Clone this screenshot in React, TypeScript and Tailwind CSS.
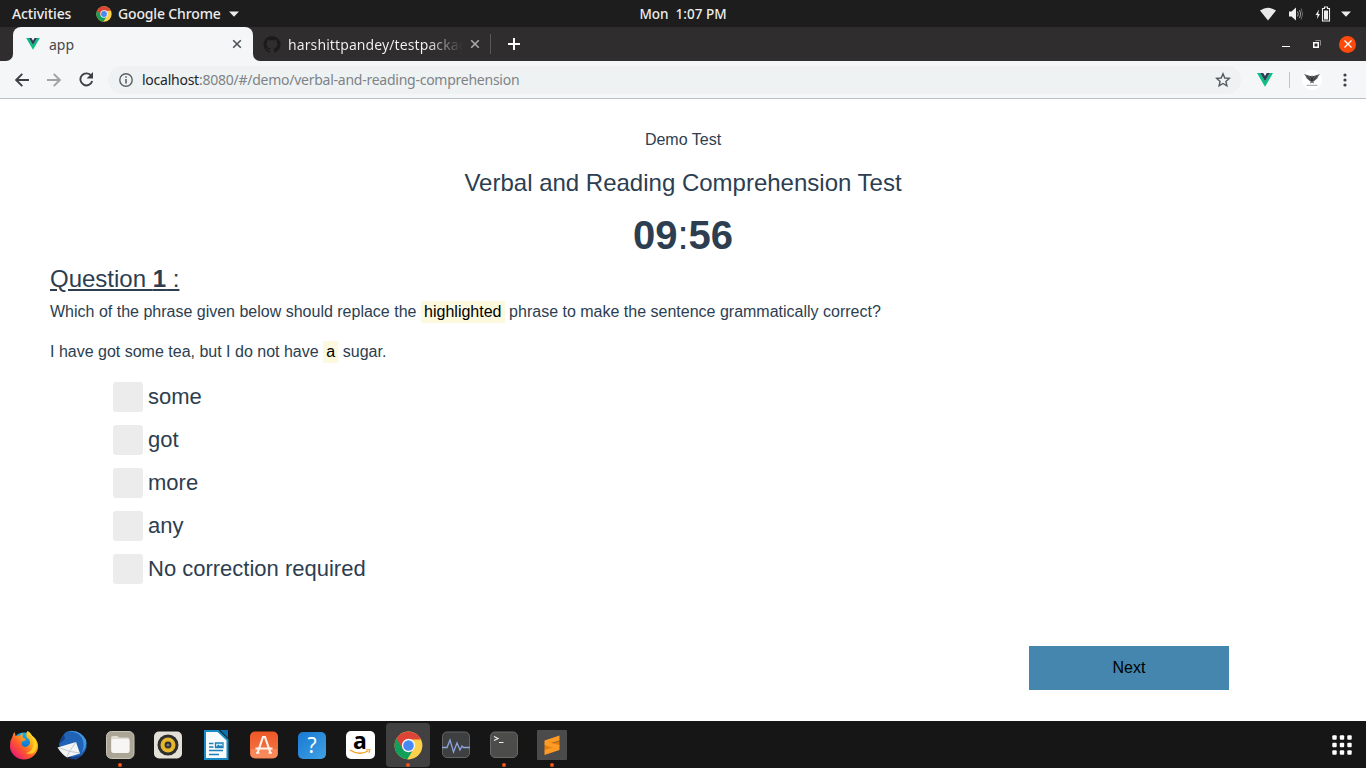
import type { ReactNode } from "react";

const uiFont = "font-['Noto_Sans','Open_Sans',sans-serif]";

function ChromeLogo({ size }: { size: number }) {
  return (
    <svg width={size} height={size} viewBox="0 0 48 48" className="shrink-0">
      <circle cx="24" cy="24" r="23" fill="#fdd14c" />
      <path d="M24 24 4.1 12.5A23 23 0 0 0 22 46.9L33 29z" fill="#11a05c" />
      <path d="M4.1 12.5A23 23 0 0 1 44.6 14H24L14.5 30z" fill="#dc4437" />
      <circle cx="24" cy="24" r="11" fill="#f5f5f5" />
      <circle cx="24" cy="24" r="8.7" fill="#4688f4" />
    </svg>
  );
}

function VueLogo({ width, height }: { width: number; height: number }) {
  return (
    <svg width={width} height={height} viewBox="0 0 16 14" className="shrink-0">
      <path d="M0 0h3.2L8 8.3 12.8 0H16L8 13.8z" fill="#0abf83" />
      <path d="M3.2 0h3L8 3.1 9.8 0h3L8 8.3z" fill="#303b57" />
    </svg>
  );
}

function CloseGlyph({ color }: { color: string }) {
  return (
    <svg width="10" height="10" viewBox="0 0 10 10" className="shrink-0">
      <path d="M1.2 1.2l7.6 7.6M8.8 1.2L1.2 8.8" stroke={color} strokeWidth="1.6" />
    </svg>
  );
}

function SystemBar() {
  return (
    <header className="grid h-[27px] shrink-0 grid-cols-[1fr_auto_1fr] items-center bg-[#1d1d1d] text-[14px] leading-[26px] font-medium text-[#ececea]">
      <div className="flex items-center pl-3">
        <span className="w-[84px] tracking-[-0.1px] whitespace-nowrap">Activities</span>
        <ChromeLogo size={16} />
        <span className="ml-[6px] w-[107px] tracking-[-0.15px] whitespace-nowrap">Google Chrome</span>
        <svg width="10" height="6" viewBox="0 0 10 6" className="ml-[4px]">
          <path d="M0 0.5h10L5 5.7z" fill="#ececea" />
        </svg>
      </div>
      <span className="text-[13.5px] whitespace-pre">Mon  1:07 PM</span>
      <div className="flex items-center justify-end pr-[15px]">
        <svg width="16" height="14" viewBox="0 0 16 14">
          <path d="M0 3.6Q8-2.2 16 3.6L8 13.4z" fill="#e9e9e9" />
        </svg>
        <svg width="16" height="14" viewBox="0 0 16 14" className="ml-[12px]">
          <path d="M1 4.5h2.5L8 .5v13l-4.500-4H1z" fill="#f0f0f0" />
          <path d="M9.500 4.500q1.500 2.500 0 5M11.500 3q2.500 4 0 8" fill="none" stroke="#a0a0a0" strokeWidth="1" />
          <path d="M13.200 1.500q2.800 5.500 0 11" fill="none" stroke="#666" strokeWidth="1" />
        </svg>
        <svg width="16" height="16" viewBox="0 0 16 16" className="ml-[11px]">
          <path d="M4 3.500 .5 9h2L2 13l3-5H3.200z" fill="#f0f0f0" />
          <path d="M7.500 2.500h2v-1.500h3v1.500h2v12.500h-7z" fill="none" stroke="#eee" strokeWidth="1.1" />
          <path d="M9 4.500h4v9H9z" fill="#eee" />
        </svg>
        <svg width="10" height="6" viewBox="0 0 10 6" className="ml-[10px]">
          <path d="M0 0.500h10L5 5.700z" fill="#ececea" />
        </svg>
      </div>
    </header>
  );
}

function TabStrip() {
  return (
    <div className="flex h-[34px] shrink-0 items-stretch bg-[#302d2e] text-[14px]">
      <div className="flex w-[13px] bg-[#f4f6f8]">
        <div className="w-full rounded-br-[7px] bg-[#302d2e]" />
      </div>
      <div className="flex w-[240px] items-center rounded-t-[8px] bg-[#f4f6f8] pr-[11px] pl-[13px] text-[#45484c]">
        <VueLogo width={14} height={12} />
        <span className="ml-[9px] flex-1">app</span>
        <CloseGlyph color="#4e5155" />
      </div>
      <div className="flex w-[10px] bg-[#f4f6f8]">
        <div className="w-full rounded-bl-[7px] bg-[#302d2e]" />
      </div>
      <div className="flex w-[229px] items-center border-r border-transparent">
        <svg width="18" height="17" viewBox="0 0 16 16" className="shrink-0">
          <path
            fill="#1b1b1c"
            d="M8 0a8 8 0 0 0-2.530 15.590c.4.070.550-.170.550-.380v-1.490c-2.010.370-2.530-.490-2.690-.940-.090-.230-.480-.940-.820-1.130-.280-.150-.680-.520-.010-.530.630-.010 1.080.580 1.230.820.720 1.210 1.870.870 2.330.660.070-.520.280-.870.510-1.070-1.780-.2-3.640-.890-3.640-3.950 0-.870.310-1.590.820-2.150-.080-.200-.360-1.020.080-2.120 0 0 .670-.210 2.200.820a7.600 7.600 0 0 1 4 0c1.530-1.040 2.200-.820 2.200-.820.440 1.100.160 1.920.080 2.120.510.560.820 1.270.820 2.150 0 3.070-1.870 3.750-3.650 3.950.290.250.540.730.540 1.480v2.200c0 .210.150.460.550.380A8 8 0 0 0 8 0z"
          />
        </svg>
        <span className="ml-[7px] w-[176px] overflow-hidden bg-linear-to-r from-[#f4f4f4] from-80% to-[#302d2e] bg-clip-text tracking-[0.1px] whitespace-nowrap text-transparent">
          harshittpandey/testpackage
        </span>
        <span className="ml-[7px]">
          <CloseGlyph color="#aaa9aa" />
        </span>
        <span className="ml-[10px] h-[20px] w-px bg-[#5a5758]" />
      </div>
      <div className="flex flex-1 items-center pl-[16px]">
        <svg width="12" height="12" viewBox="0 0 12 12">
          <path d="M6 0v12M0 6h12" stroke="#fff" strokeWidth="2" />
        </svg>
      </div>
      <div className="flex items-center pr-[10px]">
        <svg width="8" height="9" viewBox="0 0 8 9">
          <path d="M0 6.500h8" stroke="#fff" />
        </svg>
        <svg width="8" height="8" viewBox="0 0 8 8" className="ml-[23px]">
          <path d="M2.500.5h5v5" fill="none" stroke="#8b898a" />
          <path d="M.75 2.750h4.500v4.500H.750z" fill="none" stroke="#fff" strokeWidth="1.500" />
        </svg>
        <span className="ml-[18px] flex size-[17px] items-center justify-center rounded-full bg-[#fc4a0a]">
          <svg width="8" height="8" viewBox="0 0 8 8">
            <path d="M.5.5l7 7M7.500.5l-7 7" stroke="#fff" strokeWidth="1.300" />
          </svg>
        </span>
      </div>
    </div>
  );
}

function Toolbar() {
  return (
    <div className="flex h-[38px] shrink-0 items-center border-b border-[#b9bfc9] bg-[#f4f6f8] pr-[19px] pl-[15px]">
      <svg width="14" height="14" viewBox="0 0 14 14">
        <path d="M14 7H1.500M7.300 .8L1.200 7l6.100 6.200" fill="none" stroke="#3e4144" strokeWidth="1.900" />
      </svg>
      <svg width="14" height="14" viewBox="0 0 14 14" className="ml-[18px]">
        <path d="M0 7h12.500M6.700 .8L12.800 7l-6.100 6.200" fill="none" stroke="#a0a2a4" strokeWidth="1.900" />
      </svg>
      <svg width="15" height="15" viewBox="0 0 15 15" className="ml-[18px]">
        <path d="M12.300 3.900A6 6 0 1 0 13.200 9" fill="none" stroke="#3e4144" strokeWidth="1.900" />
        <path d="M14 0v6.400H7.600z" fill="#3e4144" />
      </svg>
      <div className="ml-[14px] flex h-[28px] w-[1133px] items-center rounded-full bg-[#eef2f3] pr-[10px] pl-[11px]">
        <svg width="14" height="14" viewBox="0 0 14 14">
          <circle cx="7" cy="7" r="6.200" fill="none" stroke="#5c6064" strokeWidth="1.400" />
          <path d="M7 6v4.600M7 3.200v1.600" stroke="#5c6064" strokeWidth="1.600" />
        </svg>
        <span className="ml-[9px] flex-1 text-[14px] tracking-[-0.25px] whitespace-nowrap text-[#7e8387]">
          <span className="text-[#222527]">localhost</span>:8080/#/demo/verbal-and-reading-comprehension
        </span>
        <svg width="16" height="16" viewBox="0 0 16 16">
          <path
            d="M8 1.800l1.800 4.200 4.500.4-3.400 3 1 4.400L8 11.500l-3.900 2.300 1-4.400-3.400-3 4.500-.4z"
            fill="none"
            stroke="#55595d"
            strokeWidth="1.400"
          />
        </svg>
      </div>
      <div className="ml-[16px] flex flex-1 items-center">
        <VueLogo width={16} height={14} />
        <span className="ml-[16px] h-[16px] w-px bg-[#c0c5ca]" />
        <svg width="20" height="20" viewBox="0 0 20 20" className="ml-[12px]">
          <circle cx="10" cy="10" r="10" fill="#fff" />
          <path
            d="M2 4l5 1.600 2 1L10 5.300l1 1.300 2-1L18 4l-1.800 2.600-.9 2-1.600 1.100-1.300 1.400-1.100.2.800 2.200L10 12.500l-2.100 1 .8-2.200-1.100-.2-1.300-1.400-1.600-1.100-.9-2z"
            fill="#606060"
          />
          <path d="M8.500 6l1.500 5 1.500-5M5.500 6.500l3 4M14.500 6.500l-3 4" stroke="#252525" strokeWidth=".8" fill="none" />
          <path d="M4.500 15.300h11" stroke="#8a8a8a" strokeWidth=".8" />
        </svg>
      </div>
      <svg width="4" height="14" viewBox="0 0 4 14">
        <circle cx="2" cy="2" r="1.600" fill="#3e4144" />
        <circle cx="2" cy="7" r="1.600" fill="#3e4144" />
        <circle cx="2" cy="12" r="1.600" fill="#3e4144" />
      </svg>
    </div>
  );
}

function Mark({ children }: { children: ReactNode }) {
  return <mark className="bg-[#fcf9df] px-[3.2px] pt-[2px] pb-[3px] text-black">{children}</mark>;
}

const options = ["some", "got", "more", "any", "No correction required"];

function TestPage() {
  return (
    <main className="flex-1 bg-white px-[50px] pt-[29px] font-['Liberation_Sans',Arial,sans-serif] text-[16px] leading-6 text-[#2c3e50]">
      <div className="text-center">
        <p>Demo Test</p>
        <h1 className="mt-[13px] text-[24px] leading-[36px]">Verbal and Reading Comprehension Test</h1>
        <div className="mt-[10px] text-[40px] leading-[48px]">
          <b>09</b>:<b>56</b>
        </div>
      </div>
      <h2 className="mt-[6px] text-[24px] leading-[28px] underline">
        Question <b>1</b> :
      </h2>
      <p className="mt-[7px]">
        Which of the phrase given below should replace the <Mark>highlighted</Mark> phrase to make the sentence
        grammatically correct?
      </p>
      <p className="mt-4">
        I have got some tea, but I do not have <Mark>a</Mark> sugar.
      </p>
      <ul className="mt-[18px] flex flex-col gap-[13px] pl-[63px]">
        {options.map((option) => (
          <li key={option} className="flex h-[30px] items-center gap-[5px] text-[22px] leading-[30px]">
            <span className="size-[30px] rounded-[3px] bg-[#ececec]" />
            {option}
          </li>
        ))}
      </ul>
      <div className="mt-[62px] flex justify-end pr-[87px]">
        <button className="h-[44px] w-[200px] bg-[#4486ae] text-black">Next</button>
      </div>
    </main>
  );
}

function Firefox() {
  return (
    <svg width="30" height="30" viewBox="0 0 30 30">
      <defs>
        <linearGradient id="fx" x1="1" y1="0" x2="0.100" y2="0.900">
          <stop offset="0" stopColor="#fff04a" />
          <stop offset=".35" stopColor="#ffb31a" />
          <stop offset=".65" stopColor="#ff5a2a" />
          <stop offset="1" stopColor="#e6157a" />
        </linearGradient>
        <linearGradient id="fxb" x1="0" y1="0" x2="0" y2="1">
          <stop offset="0" stopColor="#0fb5f5" />
          <stop offset="1" stopColor="#1b50b8" />
        </linearGradient>
      </defs>
      <circle cx="15" cy="13.500" r="11" fill="url(#fxb)" />
      <path
        d="M3.500 6.500Q4 3.500 5.500 2l1.200 4q2-.8 4 0Q12 3.500 14 3.200q-1 2.300-.3 4.300l3 1.500q-.2 2-3.700 2.500-1.500 3 .8 4.800 2.500 1.500 5.200-.3 2.500-2 2-4.500-.5-2.500-3.300-4Q16.500 3.500 18.500 1q2.500 1 4.500 4.500 6 4.500 6 10.500A14 13.500 0 0 1 1 16Q.8 10.500 3.500 6.500z"
        fill="url(#fx)"
      />
      <path d="M18.500 1q1 3.500 4.500 6.500 3 4.500 1 9.500-2 5-7 6 8 3 10-4.500 2-7-4-12.500Q21 2 18.500 1z" fill="#ffe226" opacity=".75" />
    </svg>
  );
}

function Thunderbird() {
  return (
    <svg width="32" height="32" viewBox="0 0 32 32">
      <path d="M10 3Q17 0 24 4.500q8 5 6.500 14-2 8-11 12l-9-5Q5 24 3 16 5 7 10 3z" fill="#1f62b6" />
      <path d="M12 2.500Q22 2 26 9q3.500 8-.5 15 6-6 4.500-13Q24 0 12 2.500z" fill="#4396e2" />
      <path d="M8 6l1 4-6 5q2-7 5-9zM22 27l4-1-6 4.500-9-1z" fill="#173f87" />
      <path d="M1.500 18.500 20 13l4 11.500-13 4q-5-3-9.500-10z" fill="#f1f3f5" />
      <path d="M2 18.500l11.500 3.800L20 13M11 28l2.500-5.700L24 24" fill="none" stroke="#bfc4ca" strokeWidth=".9" />
    </svg>
  );
}

function Files() {
  return (
    <svg width="30" height="30" viewBox="0 0 30 30">
      <rect x="1.500" y="1.500" width="27.500" height="27" rx="5" fill="#aaa594" stroke="#c8c4b6" />
      <path d="M6 8q0-2 2-2h4q1.300 0 2 1.500h8.500q2 0 2 2V20q0 2.500-2.500 2.500H8.500Q6 22.500 6 20z" fill="#dedbd3" />
      <rect x="6.500" y="9" width="18" height="14" rx="2" fill="#f7f6f4" />
    </svg>
  );
}

function Rhythmbox() {
  return (
    <svg width="30" height="30" viewBox="0 0 30 30">
      <rect x="1" y="1.500" width="28" height="27" rx="5" fill="#e4e0d8" />
      <circle cx="15" cy="15" r="10.500" fill="#2d2e2e" />
      <circle cx="15" cy="15" r="7.500" fill="#e6b62c" />
      <circle cx="15" cy="15" r="3.400" fill="#2d2e2e" />
      <circle cx="15" cy="15" r="1.600" fill="#777" />
    </svg>
  );
}

function Writer() {
  return (
    <svg width="26" height="30" viewBox="0 0 26 30">
      <path d="M2 1h13l9.500 9V29H2z" fill="#f8fbfd" stroke="#168bc6" strokeWidth="2" />
      <path d="M17 0h8v8z" fill="#0b70ab" />
      <path d="M6 13.500h4.500M6 17h4.500M6 20.500h14M6 24.500h10" stroke="#1b80b8" strokeWidth="1.600" />
      <path d="M12.500 13h7.500v4.500h-7.500z" fill="#d2ebf6" stroke="#1b80b8" strokeWidth="1.300" />
      <path d="M13 17l2.500-2.500 1.500 1.500 1-1 2 2z" fill="#1b80b8" />
    </svg>
  );
}

function Software() {
  return (
    <svg width="30" height="30" viewBox="0 0 30 30">
      <defs>
        <linearGradient id="sw" x1="0" y1="0" x2="0" y2="1">
          <stop offset="0" stopColor="#ee5825" />
          <stop offset="1" stopColor="#f37c4c" />
        </linearGradient>
      </defs>
      <rect x="1" y="1.500" width="28" height="27" rx="5" fill="url(#sw)" />
      <path d="M2 19h26v6q0 3-4 3H6q-4 0-4-3z" fill="#fa9062" opacity=".7" />
      <path d="M8.500 23 14 7h2l5.500 16M6.500 18.500h17" fill="none" stroke="#fff1e9" strokeWidth="2.200" />
      <path d="M7 23h3.500M19.500 23H23" stroke="#fff1e9" strokeWidth="1.500" />
    </svg>
  );
}

function Help() {
  return (
    <span className="flex h-[27px] w-[28px] items-center justify-center rounded-[5px] bg-linear-to-br from-[#1878d2] to-[#3fa2e4] text-[21px] leading-none text-white">
      ?
    </span>
  );
}

function Amazon() {
  return (
    <span className="flex h-[28px] w-[29px] flex-col items-center rounded-[5px] bg-white text-black">
      <span className="h-[18px] text-[23px] leading-[18px] font-bold">a</span>
      <svg width="22" height="6" viewBox="0 0 22 6">
        <path d="M1 1q9 6 18 1" fill="none" stroke="#f6a023" strokeWidth="1.400" />
        <path d="M17 .7h4l-1.200 3" fill="none" stroke="#f6a023" strokeWidth="1.100" />
      </svg>
    </span>
  );
}

function Monitor() {
  return (
    <svg width="30" height="30" viewBox="0 0 30 30">
      <rect x="1.500" y="2" width="27" height="25.500" rx="4.500" fill="#3e3f40" stroke="#646464" />
      <path d="M1 17.500h5l3-7.500 3.500 12 3.500-9 3 7 2-4 1.500 1.500H29" fill="none" stroke="#8fa4dc" strokeWidth="1.300" />
    </svg>
  );
}

function Terminal() {
  return (
    <svg width="30" height="30" viewBox="0 0 30 30">
      <rect x="1.500" y="2" width="27" height="25.500" rx="4.500" fill="#4c4c4b" stroke="#686868" />
      <path d="M5 6.500l4 2-4 2M10 12.500h4.500" fill="none" stroke="#ededed" strokeWidth="1.200" />
    </svg>
  );
}

function Sublime() {
  return (
    <svg width="30" height="30" viewBox="0 0 30 30">
      <rect width="30" height="30" rx="1" fill="#4b4b4b" />
      <path d="M7.500 15.500v5l15-4.500v-5z" fill="#e27d0d" />
      <path d="M7.500 10.500 22.500 5.500v5l-8 2.500 8 2v5L7.500 25v-5l8-2.600-8-2.100z" fill="#ff9a25" />
    </svg>
  );
}

const launchers: { name: string; icon: ReactNode; running?: boolean; active?: boolean }[] = [
  { name: "Firefox", icon: <Firefox /> },
  { name: "Thunderbird", icon: <Thunderbird /> },
  { name: "Files", icon: <Files />, running: true },
  { name: "Rhythmbox", icon: <Rhythmbox /> },
  { name: "Writer", icon: <Writer /> },
  { name: "Software", icon: <Software /> },
  { name: "Help", icon: <Help /> },
  { name: "Amazon", icon: <Amazon /> },
  { name: "Chrome", icon: <ChromeLogo size={29} />, running: true, active: true },
  { name: "Monitor", icon: <Monitor /> },
  { name: "Terminal", icon: <Terminal />, running: true },
  { name: "Sublime", icon: <Sublime />, running: true },
];

function Dock() {
  return (
    <footer className="flex h-[47px] shrink-0 items-center justify-between bg-[#161616] pr-[14px] pl-[2px]">
      <div className="flex h-full items-end gap-[4px] pb-px">
        {launchers.map((app) => (
          <div
            key={app.name}
            className={`relative flex h-[44px] w-[44px] items-center justify-center rounded-[4px] ${app.active ? "bg-[#414141]" : ""}`}
          >
            {app.icon}
            {app.running && <span className="absolute bottom-0 left-[20px] size-[4px] rounded-full bg-[#e9541f]" />}
          </div>
        ))}
      </div>
      <svg width="20" height="20" viewBox="0 0 20 20">
        {[2.5, 10, 17.5].map((y) =>
          [2.5, 10, 17.5].map((x) => (
            <rect key={`${x}-${y}`} x={x - 2.2} y={y - 2.2} width="4.400" height="4.400" rx="1" fill="#fff" />
          )),
        )}
      </svg>
    </footer>
  );
}

export default function App() {
  return (
    <div className={`flex h-[768px] w-[1366px] flex-col overflow-hidden ${uiFont}`}>
      <SystemBar />
      <TabStrip />
      <Toolbar />
      <TestPage />
      <Dock />
    </div>
  );
}
